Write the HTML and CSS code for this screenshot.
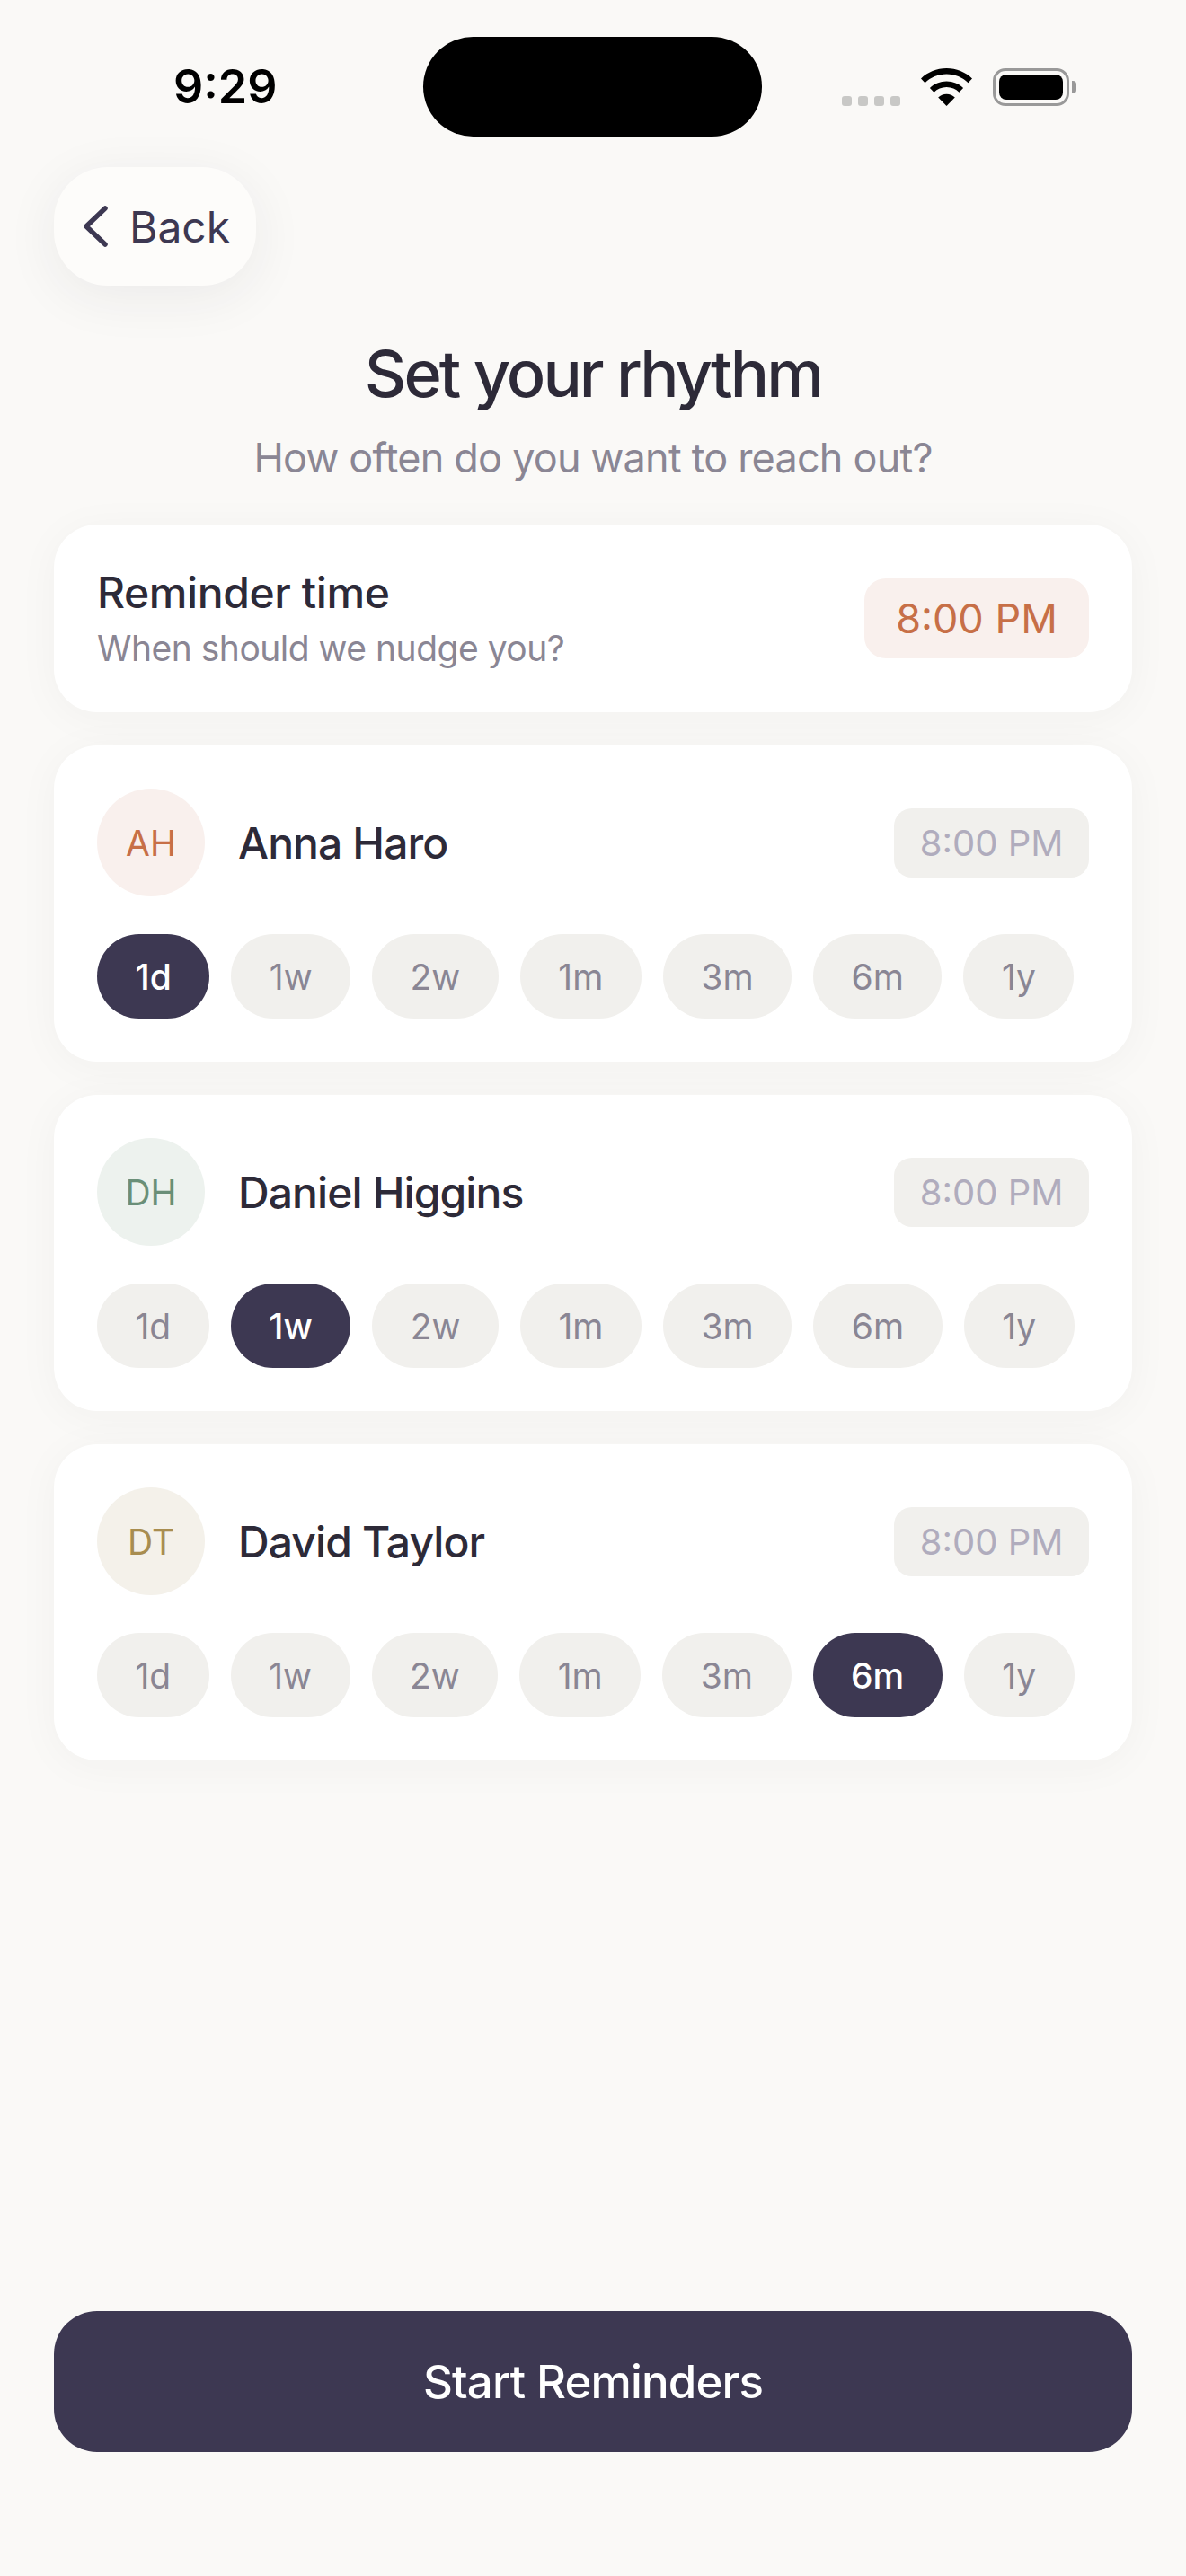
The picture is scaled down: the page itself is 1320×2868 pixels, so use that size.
FILE: index.html
```html
<!DOCTYPE html>
<html lang="en">
<head>
    <meta charset="UTF-8">
    <meta name="viewport" content="width=device-width, initial-scale=1.0">
    <title>Set your rhythm</title>
    <link rel="stylesheet" href="styles.css">
</head>
<body>
    <div class="screen">
        <!-- Status bar -->
        <header class="status-bar">
            <span class="clock">9:29</span>
            <span class="island"></span>
            <div class="status-icons">
                <div class="signal"><i></i><i></i><i></i><i></i></div>
                <svg class="wifi" width="57" height="42" viewBox="0 0 57 42">
                    <path d="M28.500 0C17.500 0 7.500 4.200 0 11.400L4.500 16.200C10.800 10.200 19.200 6.600 28.500 6.600C37.800 6.600 46.200 10.200 52.500 16.200L57 11.400C49.500 4.200 39.500 0 28.500 0Z"/>
                    <path d="M28.500 14.400C21.300 14.400 14.700 17.200 9.900 21.900L14.500 26.700C18.100 23.200 23 21 28.500 21C34 21 38.900 23.200 42.500 26.700L47.100 21.900C42.300 17.200 35.700 14.400 28.500 14.400Z"/>
                    <path d="M28.500 28.800C24.900 28.800 21.600 30.200 19.200 32.500L28.500 42L37.800 32.500C35.400 30.200 32.100 28.800 28.500 28.800Z"/>
                </svg>
                <div class="battery"><span class="battery-level"></span></div>
                <span class="battery-cap"></span>
            </div>
        </header>

        <button class="back">
            <svg width="28" height="46" viewBox="0 0 28 46" fill="none">
                <path d="M25 3L4 23L25 43" stroke="#3d3852" stroke-width="5.500" stroke-linecap="round" stroke-linejoin="round"/>
            </svg>
            Back
        </button>

        <h1>Set your rhythm</h1>
        <p class="subtitle">How often do you want to reach out?</p>

        <section class="card reminder">
            <div>
                <div class="reminder-title">Reminder time</div>
                <div class="reminder-sub">When should we nudge you?</div>
            </div>
            <span class="time-main">8:00 PM</span>
        </section>

        <section class="card">
            <div class="person">
                <span class="avatar avatar-ah">AH</span>
                <span class="name">Anna Haro</span>
                <span class="time-small">8:00 PM</span>
            </div>
            <div class="chips">
                <span class="chip active">1d</span>
                <span class="chip">1w</span>
                <span class="chip">2w</span>
                <span class="chip">1m</span>
                <span class="chip">3m</span>
                <span class="chip">6m</span>
                <span class="chip">1y</span>
            </div>
        </section>

        <section class="card">
            <div class="person">
                <span class="avatar avatar-dh">DH</span>
                <span class="name">Daniel Higgins</span>
                <span class="time-small">8:00 PM</span>
            </div>
            <div class="chips">
                <span class="chip">1d</span>
                <span class="chip active">1w</span>
                <span class="chip">2w</span>
                <span class="chip">1m</span>
                <span class="chip">3m</span>
                <span class="chip">6m</span>
                <span class="chip">1y</span>
            </div>
        </section>

        <section class="card">
            <div class="person">
                <span class="avatar avatar-dt">DT</span>
                <span class="name">David Taylor</span>
                <span class="time-small">8:00 PM</span>
            </div>
            <div class="chips">
                <span class="chip">1d</span>
                <span class="chip">1w</span>
                <span class="chip">2w</span>
                <span class="chip">1m</span>
                <span class="chip">3m</span>
                <span class="chip active">6m</span>
                <span class="chip">1y</span>
            </div>
        </section>

        <button class="start">Start Reminders</button>
    </div>
</body>
</html>
```

FILE: styles.css
```css
* {
    box-sizing: border-box;
}

html, body {
    margin: 0;
    padding: 0;
}

body {
    font-family: Inter, "Liberation Sans", sans-serif;
    background-color: #faf9f7;
    color: #2d2a38;
}

button {
    font-family: inherit;
    border: none;
    cursor: pointer;
}

.screen {
    height: 2868px;
    padding: 41px 60px 138px;
    display: flex;
    flex-direction: column;
    overflow: hidden;
}

/* Status bar */
.status-bar {
    height: 111px;
    display: flex;
    align-items: center;
    margin-bottom: 34px;
}

.clock {
    width: 411px;
    padding-left: 133px;
    font-size: 52px;
    font-weight: 600;
    color: #000;
}

.island {
    width: 377px;
    height: 111px;
    border-radius: 56px;
    background-color: #000;
}

.status-icons {
    display: flex;
    align-items: flex-end;
    margin-left: 89px;
    margin-top: 1px;
}

.signal {
    display: flex;
    gap: 7px;
    margin-right: 23px;
}

.signal i {
    width: 11px;
    height: 11px;
    border-radius: 3px;
    background-color: #c8c8c6;
}

.wifi {
    margin-right: 23px;
}

.battery {
    width: 85px;
    height: 42px;
    padding: 4px;
    border: 3px solid #999;
    border-radius: 14px;
}

.battery-level {
    display: block;
    height: 100%;
    border-radius: 8px;
    background-color: #000;
}

.battery-cap {
    width: 5px;
    height: 14px;
    margin: 0 0 14px 3px;
    border-radius: 0 4px 4px 0;
    background-color: #999;
}

/* Back */
.back {
    align-self: flex-start;
    width: 225px;
    height: 132px;
    display: flex;
    align-items: center;
    gap: 24px;
    padding: 0 0 0 32px;
    border-radius: 60px;
    background-color: #fdfcfa;
    color: #3d3852;
    font-size: 48px;
    box-shadow: 0 12px 60px rgba(45, 42, 56, 0.07);
}

h1 {
    margin: 56px 0 0;
    font-size: 72px;
    font-weight: 500;
    line-height: 84px;
    letter-spacing: -2.9px;
    text-align: center;
    color: #2d2a38;
}

.subtitle {
    margin: 25px 0 47px;
    font-size: 45px;
    line-height: 54px;
    letter-spacing: -0.8px;
    text-align: center;
    color: #8a8694;
}

/* Cards */
.card {
    margin-bottom: 37px;
    padding: 48px;
    border-radius: 48px;
    background-color: #fff;
    box-shadow: 0 6px 48px rgba(45, 42, 56, 0.04);
}

.reminder {
    height: 209px;
    padding-top: 0;
    padding-bottom: 0;
    display: flex;
    align-items: center;
    justify-content: space-between;
}

.reminder-title {
    font-size: 48px;
    font-weight: 500;
    line-height: 58px;
    letter-spacing: -0.4px;
}

.reminder-sub {
    margin-top: 9px;
    font-size: 39px;
    line-height: 48px;
    letter-spacing: -0.5px;
    color: #8a8694;
}

.time-main {
    width: 250px;
    height: 89px;
    display: flex;
    align-items: center;
    justify-content: center;
    border-radius: 24px;
    background-color: #f9f0ed;
    color: #c76f47;
    font-size: 45px;
}

.person {
    display: flex;
    align-items: center;
}

.avatar {
    width: 120px;
    height: 120px;
    display: flex;
    align-items: center;
    justify-content: center;
    border-radius: 50%;
    font-size: 39px;
}

.avatar-ah {
    background-color: #f9f0ed;
    color: #c76f47;
}

.avatar-dh {
    background-color: #edf2ee;
    color: #6a8f78;
}

.avatar-dt {
    background-color: #f4f1ea;
    color: #a88d50;
}

.name {
    flex: 1;
    margin-left: 37px;
    font-size: 48px;
    font-weight: 500;
    letter-spacing: -0.9px;
}

.time-small {
    width: 217px;
    height: 77px;
    display: flex;
    align-items: center;
    justify-content: center;
    border-radius: 20px;
    background-color: #f1f0ed;
    color: #b0acbd;
    font-size: 40px;
}

.chips {
    display: flex;
    gap: 24px;
    margin-top: 42px;
}

.chip {
    height: 94px;
    display: flex;
    align-items: center;
    padding: 0 42.5px;
    border-radius: 47px;
    background-color: #f1f0ed;
    color: #8a8694;
    font-size: 39px;
}

.chip.active {
    background-color: #3d3852;
    color: #fff;
    font-weight: 500;
}

/* Bottom button */
.start {
    margin-top: auto;
    height: 157px;
    border-radius: 48px;
    background-color: #3d3852;
    color: #fff;
    font-size: 51px;
    font-weight: 500;
    letter-spacing: -0.85px;
}
```
